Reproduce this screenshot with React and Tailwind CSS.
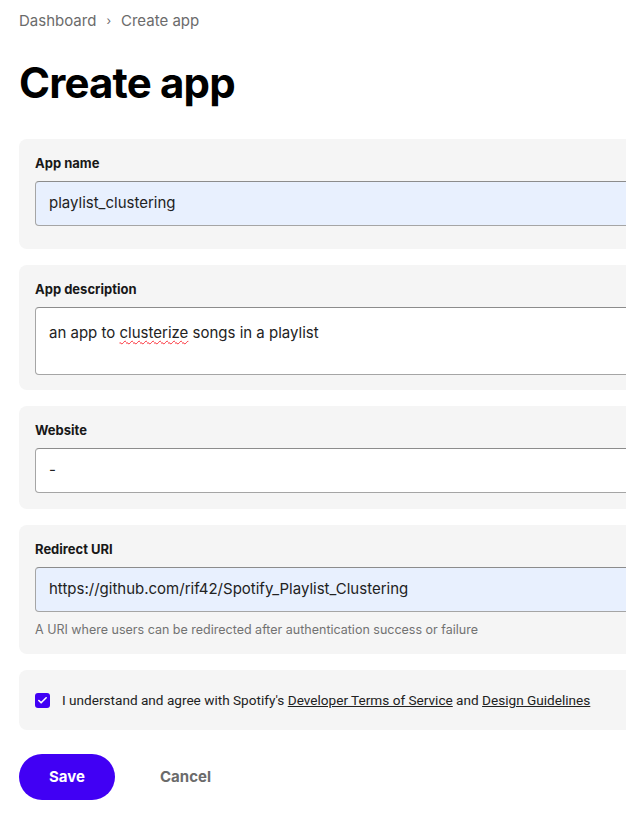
import { Check } from "lucide-react";

const panel = "rounded-l-lg bg-[#f5f5f5] px-4 pt-[14px] w-[680px]";
const label = "block text-[13px] font-bold leading-5 text-[#181818] mb-2";
const field =
  "w-full rounded border border-[#a5a5a5] border-t-[#8c8c8c] px-[13px] text-[15px] text-[#222]";

function Field({ name, children, className = "pb-4" }) {
  return (
    <div className={`${panel} ${className}`}>
      <label className={label}>{name}</label>
      {children}
    </div>
  );
}

export default function App() {
  return (
    <div
      className="min-h-[824px] bg-white pl-[19px] pt-[11px] text-[#181818]"
      style={{ fontFamily: "Inter, 'Noto Sans', sans-serif" }}
    >
      <nav className="flex items-center gap-[10px] text-[15px] leading-5 text-[#6b6b6b]">
        <span>Dashboard</span>
        <span className="text-[12px]">›</span>
        <span>Create app</span>
      </nav>

      <h1 className="mt-[26px] text-[42px] font-bold leading-[52px] tracking-[-0.02em] text-black">
        Create app
      </h1>

      <div className="mt-[30px] w-[607px] overflow-hidden flex flex-col gap-4">
        <Field name="App name" className="pb-[23px]">
          <div className={`${field} flex h-[45px] items-center bg-[#e8f0fe]`}>
            playlist_clustering
          </div>
        </Field>

        <Field name="App description" className="pb-[15px]">
          <div className={`${field} h-[68px] bg-white pt-[15px] leading-5`}>
            an app to{" "}
            <span className="underline decoration-wavy decoration-red-500 decoration-1 underline-offset-2">
              clusterize
            </span>{" "}
            songs in a playlist
          </div>
        </Field>

        <Field name="Website" className="pb-4">
          <div className={`${field} flex h-[45px] items-center bg-white`}>-</div>
        </Field>

        <Field name="Redirect URI" className="pb-[14px]">
          <div className={`${field} flex h-[45px] items-center bg-[#e8f0fe]`}>
            https://github.com/rif42/Spotify_Playlist_Clustering
          </div>
          <p className="mt-2 text-[12.5px] leading-5 text-[#727272]">
            A URI where users can be redirected after authentication success or failure
          </p>
        </Field>

        <div className="flex h-[60px] w-[680px] items-center gap-3 rounded-l-lg bg-[#f5f5f5] px-4">
          <span className="flex h-[15px] w-[15px] items-center justify-center rounded-[3px] bg-[#4100f4]">
            <Check size={11} strokeWidth={3.5} className="text-white" />
          </span>
          <span
            className="text-[13.6px] text-[#222]"
            style={{ fontFamily: "Roboto, 'Noto Sans', sans-serif" }}
          >
            I understand and agree with Spotify's{" "}
            <a className="underline">Developer Terms of Service</a> and{" "}
            <a className="underline">Design Guidelines</a>
          </span>
        </div>
      </div>

      <div className="mt-6 flex items-center gap-[45px]">
        <button className="h-[46px] w-[96px] rounded-full bg-[#4100f4] text-[15px] font-bold text-white">
          Save
        </button>
        <button className="text-[15px] font-bold text-[#6b6b6b]">Cancel</button>
      </div>
    </div>
  );
}
